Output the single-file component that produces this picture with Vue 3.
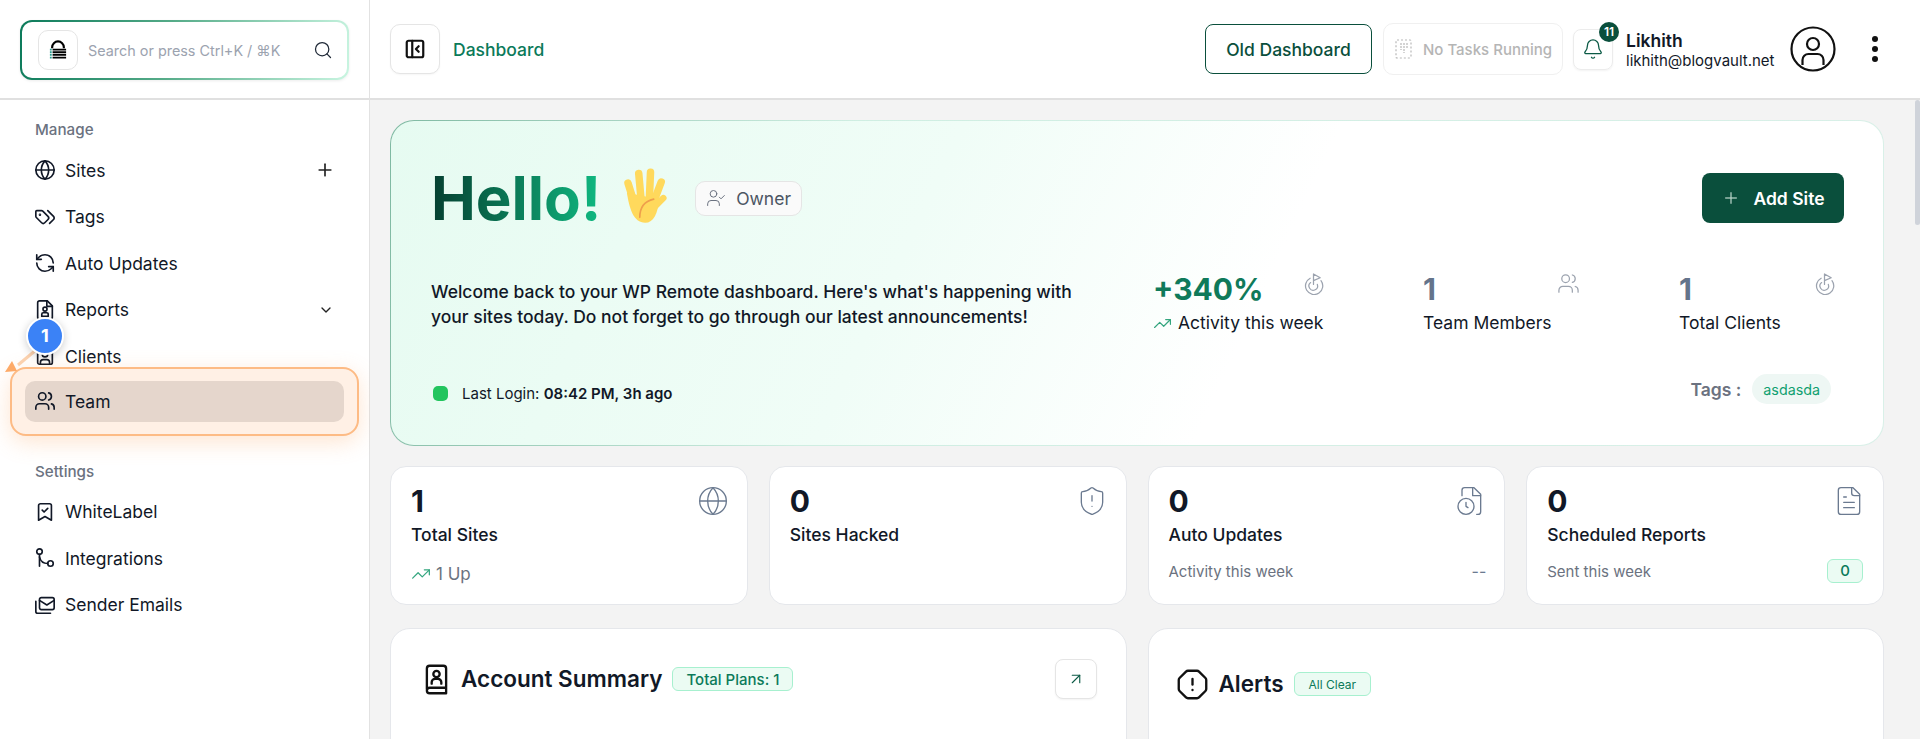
<script setup>
const icons = {
  globe: '<circle cx="12" cy="12" r="10"/><path d="M12 2a14.5 14.5 0 0 0 0 20 14.5 14.5 0 0 0 0-20"/><path d="M2 12h20"/>',
  tags: '<path d="m15 5 6.3 6.3a2.4 2.4 0 0 1 0 3.4L17 19"/><path d="M9.586 5.586A2 2 0 0 0 8.172 5H3a1 1 0 0 0-1 1v5.172a2 2 0 0 0 .586 1.414L8.29 18.29a2.426 2.426 0 0 0 3.42 0l3.58-3.58a2.426 2.426 0 0 0 0-3.42z"/><circle cx="6.5" cy="9.5" r=".5"/>',
  refresh: '<path d="M21 12a9 9 0 0 0-9-9 9.75 9.75 0 0 0-6.74 2.74L3 8"/><path d="M3 3v5h5"/><path d="M3 12a9 9 0 0 0 9 9 9.75 9.75 0 0 0 6.74-2.74L21 16"/><path d="M16 16h5v5"/>',
  report: '<path d="M14.5 2H6a2 2 0 0 0-2 2v16a2 2 0 0 0 2 2h12a2 2 0 0 0 2-2V7.5z"/><path d="M14 2v6h6"/><circle cx="12" cy="11" r="2.2"/><path d="M8.5 19v-2.5a1.5 1.5 0 0 1 1.5-1.5h4a1.5 1.5 0 0 1 1.5 1.5V19z"/>',
  clients: '<rect x="4" y="3" width="16" height="18" rx="2"/><circle cx="12" cy="10" r="3"/><path d="M7 21v-2a3 3 0 0 1 3-3h4a3 3 0 0 1 3 3v2"/>',
  users: '<path d="M16 21v-2a4 4 0 0 0-4-4H6a4 4 0 0 0-4 4v2"/><circle cx="9" cy="7" r="4"/><path d="M22 21v-2a4 4 0 0 0-3-3.87"/><path d="M16 3.13a4 4 0 0 1 0 7.75"/>',
  bookmark: '<path d="M19 21l-7-4-7 4V5a2 2 0 0 1 2-2h10a2 2 0 0 1 2 2z"/><path d="m9 10 2 2 4-4"/>',
  branch: '<circle cx="6" cy="5" r="3"/><circle cx="18" cy="18" r="3"/><path d="M6 8v13"/><path d="M6 11c1 4 4 7 9 7"/>',
  mails: '<rect x="6" y="4" width="16" height="13" rx="2"/><path d="m6 7 8 5 8-5"/><path d="M2 8v11a2 2 0 0 0 2 2h14"/>',
  plus: '<path d="M5 12h14"/><path d="M12 5v14"/>',
  chevron: '<path d="m6 9 6 6 6-6"/>',
  search: '<circle cx="11" cy="11" r="8"/><path d="m21 21-4.3-4.3"/>',
  bell: '<path d="M10.268 21a2 2 0 0 0 3.464 0"/><path d="M3.262 15.326A1 1 0 0 0 4 17h16a1 1 0 0 0 .74-1.673C19.41 13.956 18 12.499 18 8A6 6 0 0 0 6 8c0 4.499-1.411 5.956-2.738 7.326"/>',
  trend: '<path d="M22 7 13.5 15.5 8.5 10.5 2 17"/><path d="M16 7h6v6"/>',
  target: '<path d="M12 13V2l7 4-7 3"/><path d="M8.5 6.5a9 9 0 1 0 11.3 2.5"/><path d="M9 11a4.5 4.5 0 1 0 7 2"/>',
  userCheck: '<path d="M16 21v-2a4 4 0 0 0-4-4H6a4 4 0 0 0-4 4v2"/><circle cx="9" cy="7" r="4"/><path d="m16 11 2 2 4-4"/>',
  shield: '<path d="M20 13c0 5-3.5 7.5-7.66 8.95a1 1 0 0 1-.67-.01C7.5 20.5 4 18 4 13V6a1 1 0 0 1 1-1c2 0 4.5-1.2 6.24-2.72a1.17 1.17 0 0 1 1.52 0C14.51 3.81 17 5 19 5a1 1 0 0 1 1 1z"/><path d="M12 8v4"/><path d="M12 16h.01"/>',
  fileClock: '<path d="M6 8V4a2 2 0 0 1 2-2h7l5 5v13a2 2 0 0 1-2 2h-1"/><path d="M14 2v6h6"/><circle cx="9" cy="16" r="6"/><path d="M9 13v3l1.5 1"/>',
  fileText: '<path d="M15 2H6a2 2 0 0 0-2 2v16a2 2 0 0 0 2 2h12a2 2 0 0 0 2-2V7Z"/><path d="M14 2v4a2 2 0 0 0 2 2h4"/><path d="M10 9H8"/><path d="M16 13H8"/><path d="M16 17H8"/>',
  arrow: '<path d="M7 7h10v10"/><path d="M7 17 17 7"/>',
  octagon: '<path d="M12 16h.01"/><path d="M12 8v4"/><path d="M15.312 2a2 2 0 0 1 1.414.586l4.688 4.688A2 2 0 0 1 22 8.688v6.624a2 2 0 0 1-.586 1.414l-4.688 4.688a2 2 0 0 1-1.414.586H8.688a2 2 0 0 1-1.414-.586l-4.688-4.688A2 2 0 0 1 2 15.312V8.688a2 2 0 0 1 .586-1.414l4.688-4.688A2 2 0 0 1 8.688 2z"/>',
  book: '<path d="M5 19V4a2 2 0 0 1 2-2h10a2 2 0 0 1 2 2v18H7a2 2 0 0 1-2-2 2 2 0 0 1 2-2h12"/><circle cx="12" cy="8" r="2.3"/><path d="M8.5 15v-1a2.5 2.5 0 0 1 2.5-2.5h2a2.5 2.5 0 0 1 2.5 2.5v1"/>'
}

const manageItems = [
  { label: 'Sites', icon: 'globe', trailing: 'plus' },
  { label: 'Tags', icon: 'tags' },
  { label: 'Auto Updates', icon: 'refresh' },
  { label: 'Reports', icon: 'report', trailing: 'chevron' },
  { label: 'Clients', icon: 'clients' }
]

const settingsItems = [
  { label: 'WhiteLabel', icon: 'bookmark' },
  { label: 'Integrations', icon: 'branch' },
  { label: 'Sender Emails', icon: 'mails' }
]

const heroStats = [
  { value: '+340%', label: 'Activity this week', icon: 'target', accent: true, width: 270 },
  { value: '1', label: 'Team Members', icon: 'users', width: 256 },
  { value: '1', label: 'Total Clients', icon: 'target', width: 156 }
]

const cards = [
  { value: '1', title: 'Total Sites', icon: 'globe', up: '1 Up' },
  { value: '0', title: 'Sites Hacked', icon: 'shield' },
  { value: '0', title: 'Auto Updates', icon: 'fileClock', sub: 'Activity this week', dash: '--' },
  { value: '0', title: 'Scheduled Reports', icon: 'fileText', sub: 'Sent this week', pill: '0' }
]
</script>

<template>
  <div class="shell">
    <aside class="sidebar">
      <div class="brand-row">
        <div class="search-box">
          <div class="logo-box">
            <svg width="18" height="20" viewBox="0 0 20 22">
              <path d="M3.5 9V8a6.5 6.5 0 0 1 13 0v1" fill="none" stroke="#000" stroke-width="2.4" />
              <path d="M4 10.5h15M4 13.5h15M4 16.5h15M4 19.5h15" stroke="#000" stroke-width="2" />
              <path d="M1 10.5h2M1 13.5h2M1 16.5h2M1 19.5h2" stroke="#2a9d8f" stroke-width="2" />
            </svg>
          </div>
          <span class="search-text">Search or press Ctrl+K / ⌘K</span>
          <svg class="search-icon" viewBox="0 0 24 24" v-html="icons.search"></svg>
        </div>
      </div>

      <nav class="nav">
        <div class="nav-heading">Manage</div>
        <a v-for="item in manageItems" :key="item.label" class="nav-item">
          <svg class="nav-icon" viewBox="0 0 24 24" v-html="icons[item.icon]"></svg>
          <span>{{ item.label }}</span>
          <svg v-if="item.trailing" class="nav-trailing" :class="item.trailing" viewBox="0 0 24 24" v-html="icons[item.trailing]"></svg>
        </a>

        <div class="tour-highlight">
          <a class="nav-item team">
            <svg class="nav-icon" viewBox="0 0 24 24" v-html="icons.users"></svg>
            <span>Team</span>
          </a>
          <svg class="tour-arrow" width="50" height="50" viewBox="0 0 50 50">
            <path d="M37 12 13 32" stroke="#fbd1ae" stroke-width="3" />
            <path d="M0 39 12 38 7 28z" fill="#fdaa68" />
          </svg>
          <div class="tour-badge">1</div>
        </div>

        <div class="nav-heading settings">Settings</div>
        <a v-for="item in settingsItems" :key="item.label" class="nav-item">
          <svg class="nav-icon" viewBox="0 0 24 24" v-html="icons[item.icon]"></svg>
          <span>{{ item.label }}</span>
        </a>
      </nav>
    </aside>

    <div class="main">
      <header class="topbar">
        <button class="collapse-btn">
          <svg width="22" height="22" viewBox="0 0 24 24" fill="none" stroke="#111" stroke-width="2.4" stroke-linecap="round" stroke-linejoin="round">
            <rect x="3" y="3" width="18" height="18" rx="2" />
            <path d="M9 3v18" />
            <path d="m16 9-3 3 3 3" />
          </svg>
        </button>
        <span class="crumb">Dashboard</span>

        <div class="topbar-right">
          <button class="old-btn">Old Dashboard</button>
          <div class="tasks">
            <svg width="18" height="22" viewBox="0 0 18 22" fill="none" stroke="#b8b8b8" stroke-width="1.2">
              <rect x="1" y="2" width="15" height="18" rx="1" stroke-dasharray="2 2" />
              <path d="M6 5v7M9 5v10M12 5v6" stroke-dasharray="2 1" />
            </svg>
            <span>No Tasks Running</span>
          </div>
          <div class="bell">
            <svg viewBox="0 0 24 24" v-html="icons.bell"></svg>
            <span class="bell-count">11</span>
          </div>
          <div class="user-info">
            <div class="user-name">Likhith</div>
            <div class="user-email">likhith@blogvault.net</div>
          </div>
          <svg class="avatar" width="46" height="46" viewBox="0 0 46 46" fill="none" stroke="#111" stroke-width="2.2">
            <circle cx="23" cy="23" r="21.5" />
            <circle cx="23" cy="18" r="6" />
            <path d="M12.5 39v-5a6 6 0 0 1 6-6h9a6 6 0 0 1 6 6v5" />
          </svg>
          <div class="kebab"><i></i><i></i><i></i></div>
        </div>
      </header>

      <main class="content">
        <section class="hero">
          <div class="hero-top">
            <h1 class="hello">Hello!</h1>
            <svg class="hand" width="52" height="60" viewBox="0 0 48 56" fill="none" stroke-linecap="round">
              <g stroke="#ffd95c" stroke-width="7">
                <path d="M10 15 15 31" />
                <path d="M20 6 22 28" />
                <path d="M31 5 30 28" />
                <path d="M41 14 35 30" />
                <path d="M43 29 34 38" stroke-width="6" />
              </g>
              <path d="M9 24C11 38 15 52 26 52c8 0 12-9 13-22z" fill="#ffd95c" />
              <path d="M21 47c0-9 4-15 13-17" stroke="#ef9f4c" stroke-width="1.5" />
            </svg>
            <div class="role">
              <svg viewBox="0 0 24 24" v-html="icons.userCheck"></svg>
              <span>Owner</span>
            </div>
            <button class="add-btn">
              <svg viewBox="0 0 24 24" v-html="icons.plus"></svg>
              <span>Add Site</span>
            </button>
          </div>

          <div class="hero-mid">
            <p class="welcome">Welcome back to your WP Remote dashboard. Here's what's happening with your sites today. Do not forget to go through our latest announcements!</p>
            <div class="hero-stats">
              <div v-for="stat in heroStats" :key="stat.label" class="hero-stat" :style="{ width: stat.width + 'px' }">
                <div class="hero-stat-head" :class="{ accent: stat.accent }">
                  <span class="hero-stat-value">{{ stat.value }}</span>
                  <svg viewBox="0 0 24 24" v-html="icons[stat.icon]"></svg>
                </div>
                <div class="hero-stat-label">
                  <svg v-if="stat.accent" class="trend" viewBox="0 0 24 24" v-html="icons.trend"></svg>
                  <span>{{ stat.label }}</span>
                </div>
              </div>
            </div>
          </div>

          <div class="hero-bottom">
            <div class="last-login">
              <i class="dot"></i>
              <span>Last Login: <b>08:42 PM, 3h ago</b></span>
            </div>
            <div class="tags">
              <span class="tags-label">Tags :</span>
              <span class="tag-chip">asdasda</span>
            </div>
          </div>
        </section>

        <section class="card-row">
          <div v-for="card in cards" :key="card.title" class="stat-card">
            <div class="stat-head">
              <span class="stat-value">{{ card.value }}</span>
              <svg viewBox="0 0 24 24" v-html="icons[card.icon]"></svg>
            </div>
            <div class="stat-title">{{ card.title }}</div>
            <div v-if="card.up" class="stat-up">
              <svg viewBox="0 0 24 24" v-html="icons.trend"></svg>
              <span>{{ card.up }}</span>
            </div>
            <div v-if="card.sub" class="stat-sub">
              <span>{{ card.sub }}</span>
              <span v-if="card.dash" class="stat-dash">{{ card.dash }}</span>
              <span v-if="card.pill" class="stat-pill">{{ card.pill }}</span>
            </div>
          </div>
        </section>

        <section class="panel-row">
          <div class="panel">
            <div class="panel-head">
              <svg class="panel-icon" viewBox="0 0 24 24" v-html="icons.book"></svg>
              <h2>Account Summary</h2>
              <span class="panel-badge">Total Plans: 1</span>
              <button class="open-btn">
                <svg viewBox="0 0 24 24" v-html="icons.arrow"></svg>
              </button>
            </div>
          </div>
          <div class="panel">
            <div class="panel-head alerts">
              <svg class="panel-icon" viewBox="0 0 24 24" v-html="icons.octagon"></svg>
              <h2>Alerts</h2>
              <span class="panel-badge small">All Clear</span>
            </div>
          </div>
        </section>
      </main>
      <div class="scroll-thumb"></div>
    </div>
  </div>
</template>

<style scoped>
.shell {
  display: flex;
  height: 739px;
  overflow: hidden;
  font-family: Inter, 'Liberation Sans', sans-serif;
  color: #111827;
  background: #fff;
}

svg {
  flex: none;
}

/* Боковая панель */
.sidebar {
  width: 369px;
  flex: none;
  border-right: 1px solid #e2e2e2;
  background: #fff;
}

.brand-row {
  height: 78px;
  padding: 20px 20px 0;
  border-bottom: 2px solid #e0e0e0;
}

.search-box {
  display: flex;
  align-items: center;
  height: 60px;
  width: 329px;
  box-sizing: border-box;
  padding: 0 14px 0 16px;
  border: 2px solid transparent;
  border-radius: 12px;
  background: linear-gradient(#fff, #fff) padding-box, linear-gradient(100deg, #0b7a5a 0%, #55ab88 45%, #c9f5e1 100%) border-box;
  box-shadow: 0 1px 3px rgba(0, 0, 0, 0.08);
}

.logo-box {
  display: flex;
  align-items: center;
  justify-content: center;
  width: 40px;
  height: 40px;
  border: 1px solid #e5e5e5;
  border-radius: 10px;
  box-sizing: border-box;
}

.search-text {
  margin-left: 10px;
  font-size: 14.4px;
  color: #9ca3af;
  white-space: nowrap;
}

.search-icon {
  width: 20px;
  height: 20px;
  margin-left: auto;
  fill: none;
  stroke: #1f2937;
  stroke-width: 1.5;
  stroke-linecap: round;
  stroke-linejoin: round;
}

.nav {
  padding: 19px 25px 0;
}

.nav-heading {
  height: 22px;
  line-height: 22px;
  padding-left: 10px;
  font-size: 15.2px;
  font-weight: 500;
  color: #6b7280;
  margin-bottom: 6px;
}

.nav-heading.settings {
  margin-top: 25px;
  margin-bottom: 6px;
}

.nav-item {
  display: flex;
  align-items: center;
  gap: 9px;
  height: 46.5px;
  padding-left: 9px;
  font-size: 17.5px;
  font-weight: 400;
  color: #111827;
}

.nav-icon {
  width: 22px;
  height: 22px;
  fill: none;
  stroke: #111827;
  stroke-width: 1.8;
  stroke-linecap: round;
  stroke-linejoin: round;
}

.nav-trailing {
  margin-left: auto;
  margin-right: 9px;
  fill: none;
  stroke: #222;
  stroke-width: 2;
  stroke-linecap: round;
  stroke-linejoin: round;
}

.nav-trailing.plus {
  width: 20px;
  height: 20px;
  margin-right: 9px;
}

.nav-trailing.chevron {
  width: 16px;
  height: 16px;
  margin-right: 10px;
}

.tour-highlight {
  position: relative;
  margin: -13px -15px 0;
  padding: 12px 13px;
  height: 69px;
  box-sizing: border-box;
  border: 2px solid #fdbb85;
  border-radius: 16px;
  background: #fff0e5;
  box-shadow: 0 6px 22px rgba(253, 170, 104, 0.3);
}

.nav-item.team {
  height: 41px;
  padding-left: 9px;
  border-radius: 10px;
  background: #e5d6cc;
}

.tour-badge {
  position: absolute;
  left: 14px;
  top: -52px;
  width: 38px;
  height: 38px;
  box-sizing: border-box;
  display: flex;
  align-items: center;
  justify-content: center;
  border: 2px solid #fff;
  border-radius: 50%;
  background: #3b82f6;
  color: #fff;
  font-size: 18px;
  font-weight: 700;
  box-shadow: 0 2px 8px rgba(0, 0, 0, 0.2);
}

.tour-arrow {
  position: absolute;
  left: -7px;
  top: -36px;
}

/* Шапка */
.main {
  position: relative;
  flex: 1;
  min-width: 0;
  background: #f3f3f3;
}

.topbar {
  display: flex;
  align-items: center;
  height: 98px;
  padding: 0 20px;
  background: #fff;
  border-bottom: 2px solid #e0e0e0;
}

button {
  font-family: inherit;
  cursor: pointer;
}

.collapse-btn {
  display: flex;
  align-items: center;
  justify-content: center;
  width: 50px;
  height: 50px;
  padding: 0;
  background: #fff;
  border: 1px solid #e5e5e5;
  border-radius: 10px;
  box-shadow: 0 1px 2px rgba(0, 0, 0, 0.04);
}

.crumb {
  margin-left: 13px;
  font-size: 17.5px;
  font-weight: 500;
  color: #0b7a5a;
}

.topbar-right {
  display: flex;
  align-items: center;
  margin-left: auto;
  margin-right: 22px;
}

.old-btn {
  width: 167px;
  height: 50px;
  background: #fff;
  border: 1px solid #0a4f3c;
  border-radius: 8px;
  color: #0a4f3c;
  font-size: 17.5px;
  font-weight: 500;
}

.tasks {
  display: flex;
  align-items: center;
  gap: 10px;
  height: 52px;
  width: 180px;
  box-sizing: border-box;
  margin-left: 11px;
  padding-left: 11px;
  border: 1px solid #f0f0f0;
  border-radius: 10px;
  font-size: 15px;
  font-weight: 500;
  color: #b5b5b5;
  white-space: nowrap;
}

.bell {
  position: relative;
  display: flex;
  align-items: center;
  justify-content: center;
  width: 40px;
  height: 41px;
  box-sizing: border-box;
  margin-left: 10px;
  border: 1px solid #ececec;
  border-radius: 8px;
  box-shadow: 0 1px 2px rgba(0, 0, 0, 0.05);
}

.bell svg {
  width: 22px;
  height: 22px;
  fill: none;
  stroke: #0b5a45;
  stroke-width: 1.4;
  stroke-linecap: round;
  stroke-linejoin: round;
}

.bell-count {
  position: absolute;
  right: -7px;
  top: -8px;
  width: 20px;
  height: 20px;
  border-radius: 50%;
  background: #0a4f3c;
  color: #fff;
  font-size: 12px;
  font-weight: 600;
  line-height: 20px;
  text-align: center;
}

.user-info {
  width: 165px;
  margin-left: 13px;
}

.user-name {
  font-size: 17.5px;
  font-weight: 600;
  line-height: 22px;
}

.user-email {
  font-size: 15px;
  line-height: 17px;
}

.avatar {
  margin-left: -1px;
}

.kebab {
  display: flex;
  flex-direction: column;
  gap: 4px;
  margin-left: 36px;
}

.kebab i {
  width: 6px;
  height: 6px;
  border-radius: 50%;
  background: #111;
}

/* Контент */
.content {
  padding: 20px 36px 0 20px;
}

.hero {
  height: 326px;
  box-sizing: border-box;
  padding: 52px 39px 0 40px;
  border: 1px solid transparent;
  border-radius: 24px;
  background: linear-gradient(115deg, #e6fbf1 0%, #f0fdf7 35%, #fff 58%) padding-box, linear-gradient(100deg, #7fb9a2 0%, #cfeee2 30%, #d9f0e8 100%) border-box;
}

.hero-top {
  display: flex;
  align-items: center;
  height: 50px;
}

.hello {
  margin: 0;
  font-size: 60px;
  font-weight: 700;
  line-height: 1;
  background: linear-gradient(90deg, #053f30 0%, #10b981 100%);
  -webkit-background-clip: text;
  background-clip: text;
  color: transparent;
}

.hand {
  margin-left: 16px;
  margin-top: -2px;
}

.role {
  display: flex;
  align-items: center;
  gap: 10px;
  height: 33px;
  margin-left: 26px;
  padding: 0 10px;
  background: #fafafa;
  border: 1px solid #e5e5e5;
  border-radius: 10px;
  font-size: 17.5px;
  color: #4b5563;
}

.role svg {
  width: 20px;
  height: 20px;
  fill: none;
  stroke: #6b7280;
  stroke-width: 1.2;
  stroke-linecap: round;
  stroke-linejoin: round;
}

.add-btn {
  display: flex;
  align-items: center;
  justify-content: center;
  gap: 12px;
  width: 142px;
  height: 50px;
  margin-left: auto;
  background: #0a4f3c;
  border: 0;
  border-radius: 8px;
  color: #fff;
  font-size: 17.5px;
  font-weight: 600;
}

.add-btn svg {
  width: 20px;
  height: 20px;
  fill: none;
  stroke: #b9d4c9;
  stroke-width: 1.5;
}

.hero-mid {
  display: flex;
  margin-top: 48px;
}

.welcome {
  width: 665px;
  flex: none;
  margin: 8px 0 0;
  font-size: 17.5px;
  line-height: 25px;
  font-weight: 500;
  color: #111827;
}

.hero-stats {
  display: flex;
  margin-left: 57px;
}

.hero-stat-head {
  display: flex;
  align-items: flex-start;
  justify-content: space-between;
  width: 157px;
  height: 36px;
  color: #64748b;
}

.hero-stat-value {
  font-size: 30px;
  font-weight: 700;
  line-height: 36px;
}

.hero-stat-head.accent {
  color: #0f7a5a;
  width: 172px;
}

.hero-stat-head svg {
  width: 23px;
  height: 23px;
  margin-top: 1px;
  fill: none;
  stroke: #9ca3af;
  stroke-width: 1.3;
  stroke-linecap: round;
  stroke-linejoin: round;
}

.hero-stat-label {
  display: flex;
  align-items: center;
  gap: 6px;
  margin-top: 6px;
  font-size: 17.5px;
  line-height: 20px;
  color: #111827;
  white-space: nowrap;
}

.trend {
  width: 19px;
  height: 19px;
  fill: none;
  stroke: #34a67f;
  stroke-width: 1.5;
  stroke-linecap: round;
  stroke-linejoin: round;
}

.hero-bottom {
  display: flex;
  align-items: center;
  justify-content: space-between;
  margin-top: 41px;
  height: 30px;
}

.last-login {
  display: flex;
  align-items: center;
  gap: 14px;
  margin-top: 9px;
  margin-left: 2px;
  font-size: 15px;
  color: #111827;
}

.last-login b {
  font-weight: 600;
}

.dot {
  width: 15px;
  height: 15px;
  border-radius: 5px;
  background: #22c55e;
}

.tags {
  display: flex;
  align-items: center;
  gap: 11px;
  margin-right: 13px;
}

.tags-label {
  font-size: 17.5px;
  font-weight: 600;
  color: #6b7280;
}

.tag-chip {
  display: flex;
  align-items: center;
  height: 30px;
  padding: 0 11px;
  border-radius: 15px;
  background: #eef7f4;
  color: #10a070;
  font-size: 14.3px;
}

.card-row {
  display: grid;
  grid-template-columns: repeat(4, 1fr);
  gap: 21px;
  margin-top: 20px;
}

.stat-card {
  position: relative;
  height: 139px;
  box-sizing: border-box;
  padding: 16px 20px 0;
  background: #fff;
  border: 1px solid #e5e7eb;
  border-radius: 16px;
}

.stat-head {
  display: flex;
  align-items: flex-start;
  justify-content: space-between;
  height: 36px;
}

.stat-value {
  font-size: 30px;
  font-weight: 700;
  line-height: 36px;
}

.stat-head svg {
  width: 32px;
  height: 32px;
  margin-top: 2px;
  margin-right: -2px;
  fill: none;
  stroke: #6b7a90;
  stroke-width: 1;
  stroke-linecap: round;
  stroke-linejoin: round;
}

.stat-title {
  margin-top: 5px;
  font-size: 17.5px;
  line-height: 22px;
  font-weight: 500;
}

.stat-up {
  display: flex;
  align-items: center;
  gap: 5px;
  margin-top: 17px;
  font-size: 17px;
  line-height: 22px;
  color: #6b7280;
}

.stat-up svg {
  width: 20px;
  height: 20px;
  fill: none;
  stroke: #34a67f;
  stroke-width: 1.5;
  stroke-linecap: round;
  stroke-linejoin: round;
}

.stat-sub {
  display: flex;
  align-items: center;
  justify-content: space-between;
  height: 24px;
  margin-top: 13px;
  font-size: 15px;
  color: #6b7280;
}

.stat-dash {
  margin-right: -2px;
  font-size: 16px;
  color: #6b7a90;
}

.stat-pill {
  width: 36px;
  height: 24px;
  box-sizing: border-box;
  line-height: 22px;
  text-align: center;
  border: 1px solid #a7f0cf;
  border-radius: 6px;
  background: #ebfbf3;
  color: #0b7a5a;
  font-weight: 500;
}

.panel-row {
  display: grid;
  grid-template-columns: 1fr 1fr;
  gap: 21px;
  margin-top: 23px;
}

.panel {
  height: 240px;
  background: #fff;
  border: 1px solid #e5e7eb;
  border-radius: 20px;
  box-sizing: border-box;
}

.panel-head {
  display: flex;
  align-items: center;
  gap: 8px;
  padding: 30px 29px 0 29px;
}

.panel-head h2 {
  margin: 0;
  font-size: 22.5px;
  font-weight: 600;
  line-height: 40px;
}

.panel-head h2 + .panel-badge {
  margin-left: 2px;
}

.panel-icon {
  width: 33px;
  height: 33px;
  fill: none;
  stroke: #111;
  stroke-width: 1.7;
  stroke-linecap: round;
  stroke-linejoin: round;
}

.panel-head.alerts {
  gap: 10px;
  padding-top: 35px;
  padding-left: 27px;
}

.panel-head.alerts h2 + .panel-badge {
  margin-left: 0;
}

.panel-badge {
  display: flex;
  align-items: center;
  height: 24px;
  padding: 0 13px;
  box-sizing: border-box;
  border: 1px solid #a7f0cf;
  border-radius: 6px;
  background: #ebfbf3;
  color: #0b7a5a;
  font-size: 15px;
  font-weight: 500;
}

.panel-badge.small {
  padding: 0 14px;
  font-size: 12px;
  font-weight: 400;
}

.open-btn {
  display: flex;
  align-items: center;
  justify-content: center;
  width: 42px;
  height: 40px;
  padding: 0;
  margin-left: auto;
  background: #fff;
  border: 1px solid #e5e5e5;
  border-radius: 8px;
  box-shadow: 0 1px 2px rgba(0, 0, 0, 0.05);
}

.open-btn svg {
  width: 18px;
  height: 18px;
  fill: none;
  stroke: #0b5a45;
  stroke-width: 1.5;
  stroke-linecap: round;
  stroke-linejoin: round;
}

.scroll-thumb {
  position: absolute;
  right: 0;
  top: 100px;
  width: 5px;
  height: 125px;
  background: #cfd3da;
  border-radius: 3px;
}
</style>
